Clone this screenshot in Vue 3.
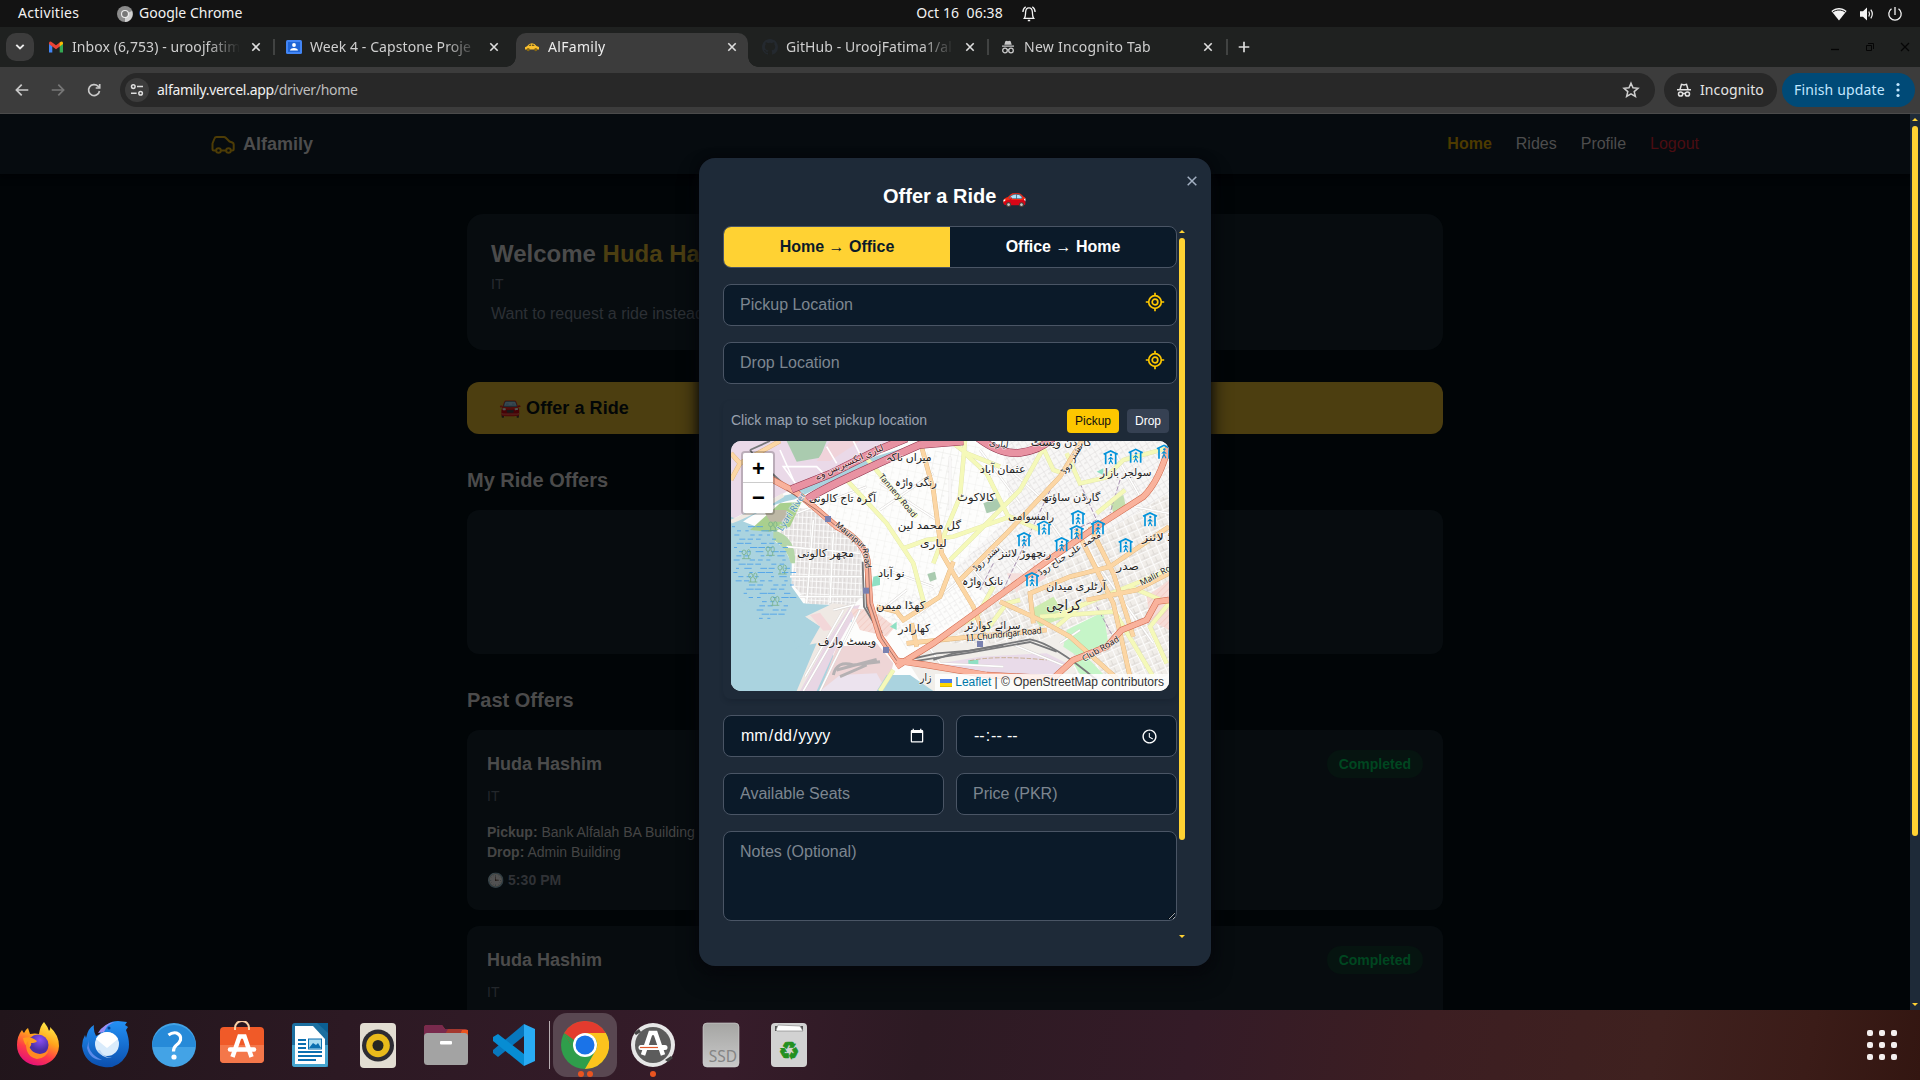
<script setup>
const tabs = [
  { title: 'Inbox (6,753) - uroojfatim', icon: 'gmail', w: 241, pad: 14, sep: true },
  { title: 'Week 4 - Capstone Proje', icon: 'class', w: 241, pad: 11 },
  { title: 'AlFamily', icon: 'car', w: 232, pad: 8, active: true },
  { title: 'GitHub - UroojFatima1/al', icon: 'github', w: 241, pad: 14, sep: true },
  { title: 'New Incognito Tab', icon: 'incognito', w: 239, pad: 11, sep: true },
]

const motorways = [
  'M215,178 L330,132 L470,62 L560,25',
  'M262,208 Q290,186 420,126 T600,44 L730,34',
  'M770,20 Q840,75 900,68 T1000,22',
]
const trunks = [
  'M560,690 L640,640 L820,510 L1000,380 L1130,290 L1270,200 Q1320,150 1345,50',
  'M150,145 L230,188 L290,238 L350,290 Q430,330 442,390 L450,520 L480,620 L530,692 L620,705 L800,735 L1000,745 L1060,690 L1160,650 L1205,600 L1280,570 L1310,515 L1347,510',
  'M530,710 L560,690',
]
const secondaries = [
  'M600,33 L640,180 L665,370 L700,430 L760,530 L790,610',
  'M1085,33 L1020,140 L860,310 L720,450',
  'M700,395 L660,500 L550,570 L530,545 L470,530',
  'M560,640 L740,622 L980,600',
  'M1347,290 L1170,410 L1050,440 L930,490 L940,580',
  'M1070,300 L1180,520 L1230,740',
  'M1110,290 L1180,430 L1240,620',
  'M840,515 L960,570 L1050,620 L1190,745',
  'M1347,430 L1250,480 L1100,510',
  'M33,70 L60,100 L33,150',
  'M60,100 L180,33',
  'M575,580 L590,650',
]
const yellows = [
  'M380,150 L500,280 L580,400 L612,520',
  'M440,85 L560,230 L590,260',
  'M735,33 L720,200 L670,320 L640,400',
  'M735,70 L800,130 L870,270',
  'M970,55 L900,180 L740,340 L690,390',
  'M550,355 L620,330 L700,320 L870,260 L960,300',
  'M700,40 L740,70 L840,110',
  'M1040,70 L1080,160 L1170,140',
  'M1160,140 L1210,90 L1340,55',
  'M1215,180 L1130,250',
  'M800,600 L860,520 L900,510',
  'M1000,560 L1347,420',
  'M960,560 L1180,545',
  'M1010,590 L1090,520',
  'M1180,540 L1300,740',
  'M1230,470 L1347,520',
  'M1347,520 L1290,590 L1340,700',
  'M520,720 L480,783',
  'M820,470 L770,560 L690,600',
  'M960,33 L1000,120 L1030,130',
]
const minors = [
  'M230,250 L440,170', 'M480,240 L640,130', 'M500,420 L640,470', 'M460,560 L560,480', 'M600,550 L740,430',
  'M340,540 L400,525 L250,783', 'M420,540 L340,700 L300,783', 'M370,540 L255,740', 'M200,350 L420,370',
  'M210,440 L430,440', 'M240,500 L430,500', 'M280,270 L260,520', 'M340,310 L330,520', 'M780,60 L900,220',
  'M820,330 L960,480', 'M620,640 L660,700 L850,710', 'M860,110 L980,220', 'M1180,60 L1260,200',
  'M960,230 L1030,330', 'M1240,230 L1347,250', 'M1130,400 L1300,640', 'M1080,600 L1020,640',
  'M870,640 L1040,710', 'M690,80 L690,240', 'M480,160 L650,270', 'M760,420 L880,560',
]
const rails = [
  'M560,690 L650,670 L750,662 L930,628 Q1000,640 1130,750',
  'M560,697 L750,668 L930,636 L1010,665',
  'M428,395 L432,530 L480,610',
  'M437,395 L440,530 L486,610',
  'M90,60 L150,33', 'M90,60 Q120,100 200,170 L300,240',
  'M640,690 L700,670 L850,645',
]
const shelters = [[1172, 82], [1247, 77], [1332, 65], [1074, 262], [972, 293], [1134, 292], [1070, 307], [912, 328], [1025, 343], [1290, 268], [1217, 346], [936, 448]]
const stations = [[324, 267], [438, 482], [498, 660], [780, 642]]
const places = [
  ['میراں ناکہ', 566, 94, 138], ['رنگی واڑہ', 588, 168, 124], ['آگرہ تاج کالونی', 367, 216, 202], ['عثمان آباد', 848, 130, 138],
  ['کالاکوٹ', 768, 214, 114], ['گل محمد لین', 628, 296, 190], ['لیاری', 640, 352, 80], ['مچھر کالونی', 317, 380, 170],
  ['نو آباد', 514, 440, 80], ['نانک واڑہ', 788, 464, 124], ['کھڈا میمن', 542, 537, 148], ['کھارادر', 583, 606, 96],
  ['سرائے کوارٹر', 818, 596, 168], ['ویسٹ وارف', 381, 644, 176], ['گارڈن ویسٹ', 1024, 48, 184], ['سولجر بازار', 1217, 137, 154],
  ['گارڈن ساؤتھ', 1053, 214, 176], ['رامسوامی', 933, 270, 138], ['رنچھوڑ لائنز', 915, 382, 158], ['ڈ لائنز', 1312, 333, 92],
  ['صدر', 1223, 421, 68], ['آرٹلری میدان', 1068, 480, 180], ['کراچی', 1031, 541, 104], ['زار', 617, 753, 34],
]
const trees = [[78, 372], [150, 362], [186, 418], [98, 442], [164, 512], [158, 288]]
const waves = Array.from({ length: 138 }, (_, i) => {
  const y = 290 + Math.floor(i / 6) * 12.5
  const x = 36 + (i % 6) * 34 + ((i * 37) % 23)
  return { x, y, w: 9 + ((i * 13) % 15) }
}).filter((d) => d.x < 212 - Math.max(0, 390 - d.y) * 0.55 - Math.max(0, d.y - 520) * 0.6 && d.x > 33 + Math.max(0, (d.y - 440) * 0.6))

const rides = [1, 2]
const dots = Array.from({ length: 9 })
</script>

<template>
  <div class="screen">
    <header class="topbar">
      <div class="tb-left">
        <span class="act">Activities</span>
        <svg width="16" height="16" viewBox="0 0 16 16"><circle cx="8" cy="8" r="8" fill="#8b8b8b" /><path d="M8 8L15 5A8 8 0 0 1 8 16z" fill="#d2d2d2" /><circle cx="8" cy="8" r="4" fill="#eee" /><circle cx="8" cy="8" r="2.9" fill="#777" /></svg>
        <span class="gc">Google Chrome</span>
      </div>
      <div class="tb-mid">
        <span>Oct 16&nbsp; 06:38</span>
        <svg width="14" height="16" viewBox="0 0 14 16" fill="none" stroke="#f2f2f2" stroke-width="1.3"><path d="M2.3 12.4C3.7 10.6 3.4 8.8 3.6 6.3 3.7 3.2 5 1.8 7 1.8s3.3 1.4 3.4 4.5c.2 2.5-.1 4.3 1.3 6.1zM.9 6C1 3.6 2 1.6 3.7.8M13.1 6C13 3.6 12 1.6 10.3.8M5.8 14.5h2.4" /></svg>
      </div>
      <div class="tb-right">
        <svg width="16" height="14" viewBox="0 0 16 14"><path d="M.4 4.1C4.800 0 11.200 0 15.600 4.100L8 13.500z" fill="#f4f4f4" /><path d="M1.700 5.200C5 2.300 11 2.300 14.300 5.200" stroke="#131313" stroke-width="1" fill="none" /></svg>
        <svg width="16" height="16" viewBox="0 0 16 16"><path d="M1 5.300h3L8 1.500v13L4 10.700H1z" fill="#f4f4f4" /><path d="M9.800 5.500q1.500 2.500 0 5M11.800 3.700q3 4.300 0 8.600" stroke="#f4f4f4" stroke-width="1.200" fill="none" /></svg>
        <svg width="16" height="16" viewBox="0 0 16 16" fill="none" stroke="#f4f4f4" stroke-width="1.300"><path d="M8 1v8M4.500 2.800a6.200 6.200 0 1 0 7 0" /></svg>
      </div>
    </header>

    <div class="tabstrip">
      <div class="tabsearch"><svg width="10" height="8" viewBox="0 0 10 8" fill="none" stroke="#ececec" stroke-width="1.900"><path d="M1.300 1.800L5 5.500l3.700-3.700" /></svg></div>
      <div v-for="t in tabs" :key="t.title" class="tab" :class="{ active: t.active, sep: t.sep }" :style="{ width: t.w + 'px', paddingLeft: t.pad + 'px' }">
        <svg class="fav" width="16" height="16" viewBox="0 0 16 16">
          <g v-if="t.icon === 'gmail'">
            <path d="M1 13.500V4.500l3.300 2.500v6.500z" fill="#4285f4" /><path d="M15 13.500V4.500L11.700 7v6.500z" fill="#34a853" />
            <path d="M1 3.800Q1.800 1.800 3.600 2.900L8 6.300l4.400-3.400v4L8 10.300 4.300 7.400 1 5z" fill="#ea4335" /><path d="M11.700 3.400Q14.200 1.600 15 3.800V5l-3.300 2.400z" fill="#fbbc04" />
          </g>
          <g v-else-if="t.icon === 'class'">
            <rect y="1" width="16" height="14" rx="1.500" fill="#4285f4" /><rect x="2" y="3" width="12" height="10" fill="#1f65d6" /><circle cx="8" cy="6" r="1.900" fill="#fff" /><path d="M4 11.500Q4.300 9 8 9t4 2.500z" fill="#fff" />
          </g>
          <g v-else-if="t.icon === 'car'">
            <path d="M1 10.500V8.200l2-1Q5 4.300 8 4.300q2.700 0 4.500 2.800l2.500.8v2.600z" fill="#fbc02d" /><path d="M4.700 7l1-1.400h1.500V7zM8 5.600h1.400L10.800 7H8z" fill="#6d5a24" /><circle cx="4.200" cy="10.600" r="1.600" fill="#8a6a12" /><circle cx="11.800" cy="10.600" r="1.600" fill="#8a6a12" />
          </g>
          <path v-else-if="t.icon === 'github'" fill="#24292f" d="M8 0C3.580 0 0 3.580 0 8c0 3.540 2.290 6.530 5.470 7.590.4.070.55-.17.55-.38v-1.490c-2.010.37-2.530-.49-2.690-.94-.09-.23-.48-.94-.82-1.130-.28-.15-.68-.52-.01-.53.63-.01 1.080.58 1.230.82.72 1.210 1.870.87 2.330.66.070-.52.28-.87.51-1.070-1.780-.2-3.640-.89-3.640-3.950 0-.87.31-1.590.82-2.150-.08-.2-.36-1.020.08-2.120 0 0 .67-.21 2.200.82a7.400 7.400 0 0 1 4 0c1.530-1.040 2.200-.82 2.200-.82.44 1.100.16 1.920.08 2.120.51.56.82 1.270.82 2.150 0 3.070-1.870 3.750-3.650 3.950.29.25.54.73.54 1.480v2.200c0 .21.150.46.550.38A8 8 0 0 0 16 8c0-4.420-3.580-8-8-8z" />
          <g v-else fill="#c8c8c8"><path d="M5.300 2.200L6.800 1.700 8 2.200l1.200-.5 1.500.5 1 3.500H4.300zM2 6.500h12v1.300H2z" /><g fill="none" stroke="#c8c8c8" stroke-width="1.300"><circle cx="5" cy="11.500" r="2.300" /><circle cx="11" cy="11.500" r="2.300" /><path d="M7.200 11q.8-.6 1.600 0" /></g></g>
        </svg>
        <span class="title">{{ t.title }}</span>
        <svg class="x" width="16" height="16" viewBox="0 0 16 16" stroke="#dedede" stroke-width="1.600"><path d="M4.300 4.300l7.400 7.400M11.700 4.300l-7.400 7.400" /></svg>
      </div>
      <svg class="plus" width="12" height="12" viewBox="0 0 12 12" stroke="#dcdcdc" stroke-width="1.700"><path d="M6 .7v10.600M.7 6h10.600" /></svg>
      <div class="winbtns">
        <svg width="10" height="10" viewBox="0 0 10 10" stroke="#050505" stroke-width="1.300"><path d="M1 7.500h8" /></svg>
        <svg width="10" height="10" viewBox="0 0 10 10" stroke="#050505" fill="none"><path d="M1.500 3.500h5v5h-5zM3 1.500h5.500V7" /></svg>
        <svg width="10" height="10" viewBox="0 0 10 10" stroke="#050505" stroke-width="1.300"><path d="M1 1l8 8M9 1L1 9" /></svg>
      </div>
    </div>

    <div class="toolbar">
      <svg width="20" height="20" viewBox="0 0 20 20" fill="none" stroke="#c9c9c9" stroke-width="1.700"><path d="M16.300 10H4.500M9.700 4.700L4.400 10l5.300 5.300" /></svg>
      <svg width="20" height="20" viewBox="0 0 20 20" fill="none" stroke="#777" stroke-width="1.700"><path d="M3.700 10h11.800M10.300 4.700l5.300 5.300-5.300 5.300" /></svg>
      <svg width="20" height="20" viewBox="0 0 20 20" fill="none" stroke="#c9c9c9" stroke-width="1.700"><path d="M15.500 11A5.500 5.500 0 1 1 14 6.200l1.600 1.500" /><path d="M15.700 4v4h-4" /></svg>
      <div class="omni">
        <div class="site"><svg width="14" height="14" viewBox="0 0 14 14" fill="none" stroke="#dedede" stroke-width="1.500"><circle cx="3.300" cy="3.600" r="1.800" /><path d="M7 3.600h6M1 10.300h5.600" /><circle cx="10.600" cy="10.300" r="1.800" /></svg></div>
        <span class="url">alfamily.vercel.app<i>/driver/home</i></span>
        <svg class="star" width="18" height="18" viewBox="0 0 18 18" fill="none" stroke="#cfcfcf" stroke-width="1.500"><path d="M9 2.200l2 4.600 5 .5-3.800 3.300 1.200 4.900L9 12.900l-4.400 2.600 1.200-4.900L2 7.300l5-.5z" /></svg>
      </div>
      <div class="incog">
        <svg width="16" height="16" viewBox="0 0 16 16" fill="none" stroke="#e2e2e2" stroke-width="1.500"><path d="M1 7.700h14M4 7.500L5.500 2.300 8 3l2.500-.7L12 7.500" /><circle cx="4.600" cy="12" r="2.100" /><circle cx="11.400" cy="12" r="2.100" /><path d="M6.600 11.500h2.800" /></svg>
        <span>Incognito</span>
      </div>
      <div class="update"><span>Finish update</span><svg width="4" height="16" viewBox="0 0 4 16" fill="#c2e7ff"><circle cx="2" cy="2.500" r="1.600" /><circle cx="2" cy="8" r="1.600" /><circle cx="2" cy="13.500" r="1.600" /></svg></div>
    </div>

    <div class="viewport">
      <div class="site-page">
        <nav class="nav">
          <svg class="logo" width="24" height="24" viewBox="0 0 24 24" fill="none" stroke="#4d3c06" stroke-width="2" stroke-linecap="round" stroke-linejoin="round"><path d="M4.500 18.500H3a1.500 1.500 0 0 1-1.500-1.500v-5.500l2-5Q4 5 5.500 5h7.500q1 0 1.700.7L18.500 9.500l2.800 1Q22.700 11 22.700 12.500V17a1.500 1.500 0 0 1-1.500 1.500h-.7" /><circle cx="7.500" cy="18.500" r="2.300" /><circle cx="17.500" cy="18.500" r="2.300" /><path d="M10 18.500h5" /></svg>
          <span class="brand">Alfamily</span>
          <span class="links"><b>Home</b><span>Rides</span><span>Profile</span><span class="out">Logout</span></span>
        </nav>
        <main class="main">
          <section class="card welcome">
            <h1>Welcome <em>Huda Ha</em></h1>
            <p class="dept">IT</p>
            <p class="want">Want to request a ride instead</p>
          </section>
          <div class="offer"><span class="emo">🚘</span> Offer a Ride</div>
          <h2>My Ride Offers</h2>
          <section class="card empty"></section>
          <h2 class="past">Past Offers</h2>
          <section v-for="r in rides" :key="r" class="card ride">
            <div class="row"><h3>Huda Hashim</h3><span class="done">Completed</span></div>
            <p class="dept">IT</p>
            <template v-if="r === 1">
              <p class="where"><b>Pickup:</b> Bank Alfalah BA Building</p>
              <p class="where"><b>Drop:</b> Admin Building</p>
              <p class="time"><span class="emo">🕒</span> 5:30 PM</p>
            </template>
          </section>
        </main>
      </div>
      <div class="pagebar"><i class="up"></i><i class="thumb"></i><i class="down"></i></div>

      <div class="modal">
        <svg class="close" width="10" height="10" viewBox="0 0 10 10" stroke="#a3b0c2" stroke-width="1.500"><path d="M.7.7l8.600 8.600M9.300.7L.7 9.300" /></svg>
        <h2 class="mtitle">Offer a Ride 🚗</h2>
        <div class="mbody">
          <div class="form">
            <div class="toggle"><span class="on">Home → Office</span><span>Office → Home</span></div>
            <div v-for="p in ['Pickup Location', 'Drop Location']" :key="p" class="field">
              <input :placeholder="p" />
              <svg width="20" height="20" viewBox="0 0 20 20" fill="none" stroke="#fdc700" stroke-width="1.700"><circle cx="10" cy="10" r="6.300" /><circle cx="10" cy="10" r="2.800" /><path d="M10 .8v3M10 16.200v3M.8 10h3M16.200 10h3" /></svg>
            </div>
            <div class="mappanel">
              <div class="maphead"><span>Click map to set pickup location</span><b class="pk">Pickup</b><b>Drop</b></div>
              <div class="map">
                <svg width="438" height="250" viewBox="33 33 1314 750" preserveAspectRatio="none">
                  <defs>
                    <pattern id="g1" width="18" height="31" patternUnits="userSpaceOnUse" patternTransform="rotate(-32)"><path d="M0 0H18M0 0V31M9 14h9" stroke="#d3d0d0" stroke-width="2" fill="none" /></pattern>
                    <pattern id="g2" width="23" height="37" patternUnits="userSpaceOnUse" patternTransform="rotate(12)"><path d="M0 0H23M0 0V37M0 17h9" stroke="#ececea" stroke-width="2" fill="none" /></pattern>
                    <pattern id="g3" width="13" height="19" patternUnits="userSpaceOnUse" patternTransform="rotate(3)"><path d="M0 0H13M0 0V19" stroke="#fff" stroke-width="4" fill="none" /><path d="M6 3V17" stroke="#cfcccb" stroke-width="1.500" /></pattern>
                    <pattern id="g4" width="31" height="23" patternUnits="userSpaceOnUse" patternTransform="rotate(-24)"><path d="M0 0H31M0 0V23" stroke="#fff" stroke-width="5" fill="none" /><path d="M4 20H28M15 5v15" stroke="#cfcac6" stroke-width="1.800" fill="none" /></pattern>
                    <pattern id="hz" width="14" height="14" patternUnits="userSpaceOnUse" patternTransform="rotate(45)"><rect width="14" height="14" fill="#f6dcd7" /><path d="M0 0V14" stroke="#eeb9b0" stroke-width="2.500" /></pattern>
                  </defs>
                  <rect x="33" y="33" width="1314" height="750" fill="#fdfdfc" />
                  <path d="M33 33H560L210 180 33 270z" fill="#ead9e8" />
                  <path d="M200 33h120l-20 50-70 12z" fill="#aacbaf" /><path d="M330 33h90l-90 60h-40z" fill="#f0d3da" />
                  <path d="M190 110h100l20 20-80 35z" fill="none" stroke="#fff" stroke-width="5" /><path d="M180 60l40 90M320 50l30 50M400 33l20 40" fill="none" stroke="#fff" stroke-width="5" />
                  <path d="M240 250L340 200 450 110 610 70 720 50 660 380 600 620 460 560 440 370z" fill="url(#g2)" />
                  <path d="M610 70L740 40 960 60 860 300 700 420z" fill="url(#g2)" />
                  <path d="M480 520L620 480 700 420 800 520 560 660z" fill="url(#g1)" opacity=".7" />
                  <path d="M850 33H1347V300L1000 380 820 510 700 420 870 260z" fill="#f8f7f6" /><path d="M850 33H1347V300L1000 380 820 510 700 420 870 260z" fill="url(#g1)" />
                  <path d="M820 510L1347 190V783H620L560 690z" fill="#f1eeea" /><path d="M820 510L1347 190V600L1180 560 940 640 680 640z" fill="url(#g4)" />
                  <path d="M1060 600L1347 520V783H1060z" fill="url(#g4)" />
                  <path d="M33 260L110 290 170 310 165 335 190 350 215 400 215 470 250 520 340 525 400 530 395 575 310 600 350 700 300 783H33z" fill="#aad3df" />
                  <path d="M240 235L300 240 360 290 425 350 425 500 400 525 270 522 215 460 225 395 205 365 165 330 180 305z" fill="#e6e3e2" />
                  <path d="M240 235L300 240 360 290 425 350 425 500 400 525 270 522 215 460 225 395 205 365 165 330 180 305z" fill="url(#g3)" />
                  <path d="M33 290Q120 220 220 200L420 103 600 48" stroke="#aad3df" stroke-width="18" fill="none" />
                  <path d="M33 275Q100 250 190 195" stroke="#efe9e1" stroke-width="12" fill="none" />
                  <path d="M90 300L180 220 245 215 210 290 150 305z" fill="#a9d08e" /><path d="M130 240h70v35h-50z" fill="#bdb8a5" />
                  <path d="M160 300Q230 320 225 400L212 400Q200 350 160 330z" fill="#b4d6a8" />
                  <path d="M255 560L340 520 400 528 250 783H150L260 660 300 590z" fill="#efe9e4" />
                  <path d="M270 555L300 548 340 600 310 602z" fill="#f3d7d9" />
                  <path d="M33 783H230L290 640 235 650 205 675 225 630 300 590 255 560 200 560 33 500z" fill="#aad3df" />
                  <path d="M390 530L420 525 350 650 290 783H240L330 620z" fill="#e8d6e4" />
                  <path d="M390 535L460 540 525 590 500 620 470 612 420 600z" fill="url(#hz)" />
                  <path d="M350 650L470 640 520 700 500 783H300z" fill="#eed5d6" />
                  <path d="M300 783L360 735 470 730 500 783z" fill="#ece3ee" />
                  <path d="M470 783L500 735 570 735 640 783z" fill="#aad3df" />
                  <path d="M600 710L780 680 980 670 1050 705 1000 735 800 735z" fill="#e9dbe9" />
                  <path d="M1040 600L1150 545 1165 640 1090 690 1030 650z" fill="#c6f5c8" /><path d="M1060 700L1100 680 1150 733H1080z" fill="#c6f5c8" />
                  <path d="M1280 500L1347 450V600L1290 570z" fill="url(#hz)" /><path d="M940 400L980 440 940 470z" fill="#f5d5d5" /><path d="M860 430L930 430 890 490z" fill="#f5dfdc" />
                  <path d="M930 540L1000 500 1040 560 960 590z" fill="#cdebb0" /><path d="M790 220L830 205 850 235 800 250z" fill="#aacbaf" /><path d="M1170 215L1210 195 1220 240 1180 250z" fill="#c5dfae" />
                  <path d="M460 440L480 435 480 465 455 470z" fill="#8fe0c4" /><path d="M622 432L645 425 650 448 630 455z" fill="#aacbaf" /><path d="M745 690h30v15h-30zM510 590l20 -15v25zM1130 125l20-10v20z" fill="#8fe0c4" />
                  <g fill="none">
                    <path d="M340 735Q350 690 400 705L480 695M350 720L470 688M360 740L440 705" stroke="#b5b1b3" stroke-width="9" />
                    <path v-for="d in minors" :key="d" :d="d" stroke="#d2cfcc" stroke-width="7" />
                    <path v-for="d in minors" :key="d + 'f'" :d="d" stroke="#fff" stroke-width="5" />
                    <path d="M840 500L1000 160 1040 120M1080 160L1130 270 1060 300M1130 530L1190 640M820 400L780 480M1200 150L1170 250" stroke="#a993b3" stroke-width="3" stroke-dasharray="14 6" />
                    <path v-for="d in rails" :key="d" :d="d" stroke="#77787a" stroke-width="5.500" />
                    <path v-for="d in yellows" :key="d" :d="d" stroke="#dfe2ac" stroke-width="13.500" />
                    <path v-for="d in yellows" :key="d + 'f'" :d="d" stroke="#f5f9b9" stroke-width="11.500" />
                    <path v-for="d in secondaries" :key="d" :d="d" stroke="#dbb27a" stroke-width="14" />
                    <path v-for="d in secondaries" :key="d + 'f'" :d="d" stroke="#fcd6a4" stroke-width="12" />
                    <path v-for="d in trunks" :key="d" :d="d" stroke="#cf6649" stroke-width="19" />
                    <path v-for="d in trunks" :key="d + 'f'" :d="d" stroke="#f9b29c" stroke-width="16" />
                    <path v-for="d in motorways" :key="d" :d="d" stroke="#8d3049" stroke-width="24" />
                    <path v-for="d in motorways" :key="d + 'f'" :d="d" stroke="#e892a2" stroke-width="21" />
                    <path d="M200 180L290 240 350 290 430 345 445 400 450 520 485 625 530 692" stroke="#75504d" stroke-width="2" />
                    <path d="M750 692Q830 675 980 690" stroke="#b79a6a" stroke-width="2" stroke-dasharray="14 5" />
                  </g>
                  <path v-for="(w, i) in waves" :key="i" :d="`M${w.x} ${w.y}h${w.w}`" stroke="#4aa0ea" stroke-width="2.600" />
                  <g v-for="(t, i) in trees" :key="'t' + i" :transform="`translate(${t[0]},${t[1]})`" fill="none" stroke="#77b08a" stroke-width="2.400"><ellipse cx="-6" cy="-5" rx="6" ry="7" /><ellipse cx="8" cy="-4" rx="5" ry="9" /><path d="M-6 2v12M8 5v9M-12 14h26" /></g>
                  <rect v-for="(s, i) in stations" :key="'s' + i" :x="s[0] - 9" :y="s[1] - 9" width="18" height="18" fill="#7981b0" />
                  <g v-for="(s, i) in shelters" :key="'h' + i" :transform="`translate(${s[0]},${s[1]})`"><path d="M-15 21V-10M15 21V-10M-21 -9L0 -19 21 -9" fill="none" stroke="#0092da" stroke-width="5" /><circle cx="1" cy="-7" r="3.500" fill="#0092da" /><path d="M0 -1v10l-5 11M0 8l6 12M-7 6l7-6 7 6" fill="none" stroke="#0092da" stroke-width="3.200" /></g>
                  <g class="maptext" text-anchor="middle">
                    <text v-for="p in places" :key="p[0]" :x="p[1]" :y="p[2]" :font-size="p[0] === 'کراچی' ? 43 : 33" :textLength="p[3]" lengthAdjust="spacingAndGlyphs">{{ p[0] }}</text>
                    <g font-size="27">
                      <text transform="translate(392,104) rotate(-24)" fill="#3a1520">لیاری ایکسپریس وے</text>
                      <text transform="translate(835,50) rotate(8)">لیاری</text>
                      <text transform="translate(527,202) rotate(50)" font-size="25">Tannery Road</text>
                      <text transform="translate(386,322) rotate(40)" font-size="25">Mauripur</text>
                      <text transform="translate(432,386) rotate(80)" font-size="25">Road</text>
                      <text transform="translate(222,250) rotate(-57)" font-size="27" fill="#4c8fbd">Lyari River</text>
                      <text transform="translate(804,392) rotate(-42)">نشتر روڈ</text>
                      <text transform="translate(1062,92) rotate(-58)">نشتر روڈ</text>
                      <text transform="translate(1052,378) rotate(-33)">محمد علی جناح روڈ</text>
                      <text transform="translate(853,622) rotate(-6)" textLength="228">I.I. Chundrigar Road</text>
                      <text transform="translate(1146,664) rotate(-31)" font-size="26">Club Road</text>
                      <text transform="translate(1310,444) rotate(-28)" font-size="26">Malir Ro</text>
                    </g>
                  </g>
                </svg>
                <div class="zoomctl"><span>+</span><span>−</span></div>
                <div class="attr"><svg width="12" height="8" viewBox="0 0 12 8"><path fill="#4c7be1" d="M0 0h12v4H0z" /><path fill="#ffd500" d="M0 4h12v3H0z" /><path fill="#e0bc00" d="M0 7h12v1H0z" /></svg><a>Leaflet</a> | © OpenStreetMap contributors</div>
              </div>
            </div>
            <div class="pair"><input type="date" /><input type="time" /></div>
            <div class="pair"><input placeholder="Available Seats" /><input placeholder="Price (PKR)" /></div>
            <textarea placeholder="Notes (Optional)"></textarea>
          </div>
          <div class="mbar"><i class="up"></i><i class="thumb"></i><i class="down"></i></div>
        </div>
      </div>
    </div>

    <footer class="dock">
      <div class="app"><svg viewBox="0 0 48 48">
        <defs>
          <linearGradient id="ff" x1=".8" y1="0" x2=".35" y2="1"><stop offset="0" stop-color="#fff44f" /><stop offset=".4" stop-color="#ffa41c" /><stop offset=".7" stop-color="#ff3d47" /><stop offset="1" stop-color="#e3107a" /></linearGradient>
          <radialGradient id="fp" cx=".6" cy=".25"><stop offset="0" stop-color="#8b50f5" /><stop offset="1" stop-color="#4b2fa5" /></radialGradient>
          <linearGradient id="tb" x1="0" y1="0" x2="0" y2="1"><stop offset="0" stop-color="#2391f5" /><stop offset="1" stop-color="#0b4fae" /></linearGradient>
        </defs>
        <path d="M30 1Q34 6 35 10q2-2 1-4Q45 14 45 25A21 20 0 0 1 3 24Q3 15 8 9q1 2 2 3 2-4 4-5l2 6q5-1 9 0 1-8 5-12z" fill="url(#ff)" />
        <circle cx="24" cy="24" r="10.500" fill="url(#fp)" /><path d="M9 17Q16 15 20 18l3 2q-1 2-6 2 1 2-2 5-5-3-6-10z" fill="#ff9d1e" /><path d="M14 20Q15 32 26 33q7-1 9-5-2 9-12 10-11-2-11-15z" fill="#ff8a22" />
      </svg></div>
      <div class="app"><svg viewBox="0 0 48 48">
        <path d="M18 13Q24 0 36 0l9 1-2 3 3 2-2 3Q50 25 44 35 36 48 22 46 2 43 0 25 0 19 3 14l1 3Q6 7 12 4q-1 5 2 11z" fill="url(#tb)" /><path d="M16 12Q22 2 33 1q-8 2-11 10z" fill="#9a8df2" /><path d="M7 18Q4 32 20 39q-12 0-15-12z" fill="#5b8bea" /><circle cx="25" cy="23" r="12" fill="#d9ebfb" /><path d="M14 18l11 9 11-9q-4-7-11-7t-11 7z" fill="#fff" /><path d="M15 29Q21 38 30 37q-9-1-12-8z" fill="#bcd6f5" /><circle cx="27" cy="7" r="1.500" fill="#063e93" />
      </svg></div>
      <div class="app"><svg viewBox="0 0 48 48"><circle cx="24" cy="24" r="22" fill="#43a3e6" /><path d="M2 26A22 22 0 0 1 46 26z" fill="#268ad8" /><path d="M18.500 14q4-3 8-2 5 2 4 7-1 3-4.500 5.500-2.500 2-2.500 6" fill="none" stroke="#fff" stroke-width="3.200" /><circle cx="24" cy="36" r="2.600" fill="#fff" /></svg></div>
      <div class="app"><svg viewBox="0 0 48 48"><rect x="2" y="6" width="44" height="36" rx="4" fill="#f05a28" /><path d="M2 24H46V38a4 4 0 0 1-4 4H6a4 4 0 0 1-4-4z" fill="#f4774a" /><path d="M17 9V7a7 7 0 0 1 14 0v2" fill="none" stroke="#fbd0a5" stroke-width="2" /><g fill="none" stroke="#fff"><path d="M14.500 36L21.500 15.500h5L33.500 36" stroke-width="4.500" /><path d="M12 28.500H36" stroke-width="4.500" stroke-linecap="round" /></g></svg></div>
      <div class="app"><svg viewBox="0 0 48 48"><path d="M9 2H33L42 11V46H9Q6 46 6 43V5Q6 2 9 2z" fill="#1c6fa0" /><path d="M6 24H42V43q0 3-3 3H9q-3 0-3-3z" fill="#45a5cf" /><path d="M9 5H27L39 18V43H9z" fill="#fff" /><path d="M31 2H42V12z" fill="#0b5f93" /><path d="M12 19h8M12 23h8M12 27h8M12 31h24M12 35h24M12 39h18" stroke="#0b6fb0" stroke-width="2" /><rect x="22.500" y="18" width="13" height="10" fill="#a9dbf0" stroke="#0b6fb0" /><path d="M23 27l4-5 3 2 2-2 3 5z" fill="#0b6fb0" /></svg></div>
      <div class="app"><svg viewBox="0 0 48 48"><rect x="6" y="2" width="36" height="45" rx="4" fill="#e2ddd2" /><circle cx="24" cy="24.500" r="16" fill="#2d2c33" /><circle cx="24" cy="24.500" r="11.800" fill="#e9bb1b" /><circle cx="24" cy="24.500" r="5.500" fill="#272722" /></svg></div>
      <div class="app"><svg viewBox="0 0 48 48"><path d="M2 15V7q0-3 3-3H20l3 4H43q3 0 3 3v4z" fill="#a4382f" /><path d="M2 15V7q0-3 3-3H20l3 4h3l-4 7z" fill="#792a4d" /><path d="M40 9H46V14H38z" fill="#ea5420" /><rect x="2" y="12" width="44" height="32" rx="3.500" fill="#a3a3a3" /><rect x="18" y="20" width="12" height="3.500" rx="1" fill="#fff" /></svg></div>
      <div class="app"><svg viewBox="0 0 48 48"><path d="M34 3L45 8V40L34 45z" fill="#29abf4" /><path d="M34 3V15L8 36 3 32V29z" fill="#0877bd" /><path d="M3 16L8 13 34 33V45L3 20z" fill="#078dd3" /></svg></div>
      <div class="dsep"></div>
      <div class="app act-app"><svg viewBox="0 0 48 48"><circle cx="24" cy="24" r="24" fill="#2f9e4b" /><path d="M3.200 12A24 24 0 0 1 44.800 12H24A12 12 0 0 0 13.600 18z" fill="#e33b2e" /><path d="M44.800 12A24 24 0 0 1 24 48L34.400 30A12 12 0 0 0 34 17L24 12z" fill="#fcc31d" /><path d="M3.200 12L13.600 30 24 24z" fill="#2f9e4b" /><path d="M3.200 12H24V24H10z" fill="#e33b2e" /><path d="M3.200 12L14 31 20 24z" fill="#2f9e4b" /><circle cx="24" cy="24" r="12" fill="#fff" /><circle cx="24" cy="24" r="9.500" fill="#1a73e8" /></svg><i class="run"><b></b><b></b></i></div>
      <div class="app"><svg viewBox="0 0 48 48"><circle cx="24" cy="24" r="22" fill="#e7e7e7" /><circle cx="24" cy="24" r="18" fill="#5c5c5c" /><path d="M5 12l5-4 2 3-5 3zM36 39l6-4 2 2-5 4z" fill="#444" /><path d="M14 34L21.500 12h5L34 34" fill="none" stroke="#fff" stroke-width="4.500" /><path d="M12 26.500H36" stroke="#fff" stroke-width="5" stroke-linecap="round" /><path d="M11 26.500H29" stroke="#e0592b" stroke-width="1.200" /></svg><i class="run"><b></b></i></div>
      <div class="app"><svg viewBox="0 0 48 48"><rect x="6" y="2" width="36" height="44" rx="4" fill="url(#ssd)" stroke="#d3d3d3" stroke-width=".6" /><defs><linearGradient id="ssd" x1="0" y1="0" x2="0" y2="1"><stop offset="0" stop-color="#a5a5a3" /><stop offset="1" stop-color="#c9c9c9" /></linearGradient></defs><text x="26" y="41" text-anchor="middle" font-family="Noto Sans, sans-serif" font-size="15.500" fill="#858585">SSD</text></svg></div>
      <div class="app"><svg viewBox="0 0 48 48"><rect x="6" y="2" width="36" height="44" rx="4" fill="#d2d2d2" /><path d="M10 10V5h28v5z" fill="#545454" /><path d="M11 9l2-5 22 1 3 5H12z" fill="#fff" stroke="#8b8b8b" stroke-width=".7" /><text x="24" y="38" text-anchor="middle" font-family="DejaVu Sans, sans-serif" font-size="24" fill="#23901f" stroke="#23901f" stroke-width=".7">♻</text></svg></div>
      <div class="grid"><i v-for="(d, i) in dots" :key="i"></i></div>
    </footer>
  </div>
</template>

<style>
body { margin: 0; background: #010507; }
</style>

<style scoped>
* { box-sizing: border-box; }
.screen { width: 1920px; height: 1080px; overflow: hidden; display: flex; flex-direction: column; font-family: "Liberation Sans", Arial, sans-serif; color: #fff; }
svg { display: block; flex: none; }
.topbar, .tabstrip, .toolbar { font-family: "Noto Sans", sans-serif; font-size: 14px; white-space: nowrap; }
.topbar span, .toolbar span { position: relative; top: -1px; }
.topbar { height: 27px; background: #131313; display: grid; grid-template-columns: 1fr auto 1fr; align-items: center; color: #f2f2f2; flex: none; }
.tb-left { display: flex; align-items: center; padding-left: 18px; }
.act { width: 99px; letter-spacing: .3px; }
.gc { margin-left: 6px; }
.tb-mid { display: flex; align-items: center; gap: 19px; transform: translateX(16px); letter-spacing: .08px; }
.tb-right { display: flex; align-items: center; justify-content: flex-end; gap: 12px; padding-right: 17px; }
.tabstrip { height: 40px; background: #1f2120; display: flex; flex: none; color: #cfcfcf; }
.tabsearch { width: 28px; height: 28px; margin: 6px 0 0 6px; border-radius: 10px; background: #3c3c3c; display: flex; align-items: center; justify-content: center; }
.tab { height: 34px; margin-top: 6px; display: flex; align-items: center; position: relative; padding-bottom: 6px; }
.title { width: 168px; margin: -2px 8px 0; letter-spacing: .08px; -webkit-mask-image: linear-gradient(90deg, #000 135px, transparent 168px); mask-image: linear-gradient(90deg, #000 135px, transparent 168px); }
.tab:last-of-type .title, .tab:nth-child(6) .title { letter-spacing: .25px; }
.active { background: #3c3c3c; border-radius: 10px 10px 0 0; color: #ececec; }
.active .title { letter-spacing: .3px; }
.active::before, .active::after { content: ""; position: absolute; bottom: 0; width: 10px; height: 10px; }
.active::before { left: -10px; background: radial-gradient(circle at 0 0, transparent 9.500px, #3c3c3c 10px); }
.active::after { right: -10px; background: radial-gradient(circle at 100% 0, transparent 9.500px, #3c3c3c 10px); }
.sep::after { content: ""; position: absolute; right: 0; top: 6px; width: 2px; height: 16px; background: #414342; }
.plus { margin: 14px 0 0 10px; }
.winbtns { margin: 15px 10px 0 auto; display: flex; gap: 25px; }
.toolbar { height: 47px; background: #3c3c3c; border-bottom: 1px solid #4b4b4b; display: flex; align-items: center; padding: 0 5px 0 12px; gap: 16px; flex: none; color: #e4e4e4; }
.omni { width: 1535px; height: 34px; border-radius: 17px; background: #282828; display: flex; align-items: center; padding: 0 15px 0 5px; }
.site { width: 24px; height: 24px; border-radius: 12px; background: #3c3c3c; display: flex; align-items: center; justify-content: center; }
.url { margin-left: 8px; letter-spacing: -.29px; color: #f0f0f0; }
.url i { font-style: normal; color: #bdbdbd; }
.star { margin-left: auto; }
.incog { margin-left: -7px; width: 113px; height: 34px; border-radius: 17px; background: #282828; display: flex; align-items: center; gap: 8px; padding-left: 12px; }
.incog span { letter-spacing: .1px; }
.update { margin-left: -11px; width: 133px; height: 34px; border-radius: 17px; background: #004a77; color: #c2e7ff; display: flex; align-items: center; justify-content: space-between; padding: 0 15px 0 12px; letter-spacing: .15px; }
.viewport { height: 896px; position: relative; display: flex; flex: none; overflow: hidden; }
.site-page { width: 1910px; height: 896px; overflow: hidden; background: #010507; }
.nav { height: 60px; background: #060b0f; padding: 0 211px; display: flex; align-items: center; font-size: 16px; color: #4d4d4d; box-shadow: 0 3px 6px #000205; }
.brand { font-size: 18px; font-weight: bold; margin-left: 8px; }
.links { margin-left: auto; display: flex; gap: 24px; }
.links b { color: #4d3a00; }
.links .out { color: #4b0d12; }
.main { width: 976px; margin: 40px 0 0 467px; }
.card { background: #070c0f; border-radius: 12px; }
h1, h2, h3, p { margin: 0; }
.welcome { height: 136px; border-radius: 16px; padding: 24px; }
h1 { font-size: 24px; line-height: 32px; color: #4b4b4b; }
h1 em { font-style: normal; color: #4b3e11; }
.dept { font-size: 14px; line-height: 20px; color: #272b30; margin-top: 4px; }
.want { font-size: 16px; line-height: 24px; color: #2c3035; margin-top: 8px; }
.offer { margin-top: 32px; height: 52px; border-radius: 12px; background: #4c3e10; color: #020607; font-size: 18px; font-weight: bold; line-height: 52px; padding-left: 32px; letter-spacing: .06px; }
.emo { filter: brightness(.32); }
.main h2 { font-size: 20px; line-height: 28px; color: #4b4b4b; margin: 32px 0 16px; }
.empty { height: 144px; }
.ride { height: 180px; padding: 20px; margin-bottom: 16px; font-size: 14px; color: #454545; }
.row { display: flex; justify-content: space-between; align-items: center; height: 28px; }
h3 { font-size: 18px; color: #4b4b4b; }
.done { height: 28px; line-height: 28px; border-radius: 14px; padding: 0 12px; background: #061410; color: #004620; font-weight: bold; }
.ride .dept { margin: 8px 0 16px; color: #23272b; }
.where { line-height: 20px; }
.time { line-height: 20px; margin-top: 8px; color: #303236; font-weight: bold; letter-spacing: .05px; }
.pagebar { width: 10px; background: #1e2a38; display: flex; flex-direction: column; align-items: center; }
.up, .down { width: 0; height: 0; border: 3px solid transparent; }
.up { border-bottom: 3px solid #ffd233; border-top: 0; }
.down { border-top: 3px solid #ffd233; border-bottom: 0; margin-top: auto; }
.thumb { width: 6px; border-radius: 3px; background: #ffd233; margin-top: 5px; }
.pagebar .up { margin-top: 4px; }
.pagebar .thumb { height: 710px; }
.pagebar .down { margin-bottom: 4px; }
.modal { position: absolute; left: 699px; top: 44px; width: 512px; height: 808px; border-radius: 16px; background: #1e2a38; padding: 24px 24px 0; box-shadow: 0 12px 20px rgba(6, 7, 12, .85), 0 0 8px rgba(6, 6, 10, .7); }
.close { position: absolute; right: 14px; top: 18px; }
.mtitle { font-size: 20px; line-height: 28px; text-align: center; }
.mbody { margin-top: 16px; display: flex; height: 716px; }
.form { width: 454px; display: flex; flex-direction: column; gap: 16px; }
.toggle { height: 42px; display: flex; border: 1px solid #4a5565; border-radius: 8px; overflow: hidden; background: #0b1a29; flex: none; }
.toggle span { flex: 1; text-align: center; line-height: 40px; font-weight: bold; font-size: 16px; }
.toggle .on { background: #ffd233; color: #0b1a29; }
.field { position: relative; height: 42px; flex: none; }
.field svg { position: absolute; right: 12px; top: 8px; }
input, textarea { display: block; width: 100%; height: 42px; margin: 0; border: 1px solid #4a5565; border-radius: 8px; background: #0b1a29; color: #fff; font: 16px "Liberation Sans", Arial, sans-serif; padding: 8px 16px; color-scheme: dark; outline: none; }
input[type="time"]::-webkit-calendar-picker-indicator { width: 17px; height: 17px; margin-right: -1px; }
input::placeholder, textarea::placeholder { color: #7d8690; }
textarea { height: 90px; flex: none; line-height: 24px; resize: both; }
.mappanel { height: 299px; padding: 9px 8px 8px; border-radius: 8px; box-shadow: 0 3px 5px -1px rgba(10, 20, 32, .25); flex: none; }
.maphead { height: 24px; display: flex; align-items: center; font-size: 14px; color: #99a1af; }
.maphead span { margin-right: auto; position: relative; top: -1px; }
.maphead b { font-weight: normal; font-size: 12px; line-height: 24px; width: 42px; text-align: center; border-radius: 4px; background: #364153; color: #fff; margin-left: 8px; }
.maphead .pk { width: 52px; background: #fdc700; color: #101010; }
.map { width: 438px; height: 250px; margin-top: 8px; border-radius: 10px; overflow: hidden; position: relative; }
.maptext { font-family: "Noto Sans", "DejaVu Sans", sans-serif; fill: #222; paint-order: stroke; stroke: rgba(255, 255, 255, .6); stroke-width: 4px; }
.zoomctl { position: absolute; left: 10px; top: 10px; border: 2px solid rgba(0, 0, 0, .2); border-radius: 4px; background: #ccc padding-box; overflow: hidden; color: #000; }
.zoomctl span { display: block; width: 30px; height: 30px; background: #fff; font: bold 22px/31px "Liberation Sans", sans-serif; text-align: center; padding-left: 1px; }
.zoomctl span:first-child { height: 29px; }
.zoomctl span + span { margin-top: 1px; height: 30px; line-height: 30px; }
.attr { position: absolute; right: 0; bottom: 0; height: 17px; line-height: 17px; padding: 0 5px; background: rgba(255, 255, 255, .8); color: #333; font-size: 12px; display: flex; align-items: center; white-space: pre; }
.attr svg { margin-right: 3px; }
.attr a { color: #0078a8; }
.pair { display: flex; gap: 12px; flex: none; }
.mbar { width: 6px; margin-left: 2px; display: flex; flex-direction: column; align-items: center; }
.mbar .up { margin-top: 4px; }
.mbar .thumb { height: 602px; }
.mbar .down { margin-bottom: 4px; }
.dock { height: 70px; display: flex; padding: 3px 0 0 6px; background: linear-gradient(100deg, #21151b 0, #2c1923 18%, #361c2a 38%, #2d1a23 48%, #341b27 62%, #3c1e22 74%, #3f211f 86%, #3b1c18 94%, #331611 100%); flex: none; }
.app { width: 64px; height: 64px; margin-right: 4px; border-radius: 14px; display: flex; align-items: center; justify-content: center; position: relative; }
.app svg { width: 48px; height: 48px; }
.dsep { width: 1px; height: 48px; background: #b9afb3; margin: 8px 3px 0 -1px; }
.act-app { background: #594751; }
.run { position: absolute; bottom: 0; left: 0; right: 0; display: flex; justify-content: center; gap: 3px; }
.run b { width: 6px; height: 6px; border-radius: 3px; background: #e95420; }
.grid { margin: 17px 23px 0 auto; display: grid; grid-template-columns: repeat(3, 6px); grid-auto-rows: 6px; gap: 6px; height: 30px; }
.grid i { background: #f4efee; border-radius: 2px; }
</style>
